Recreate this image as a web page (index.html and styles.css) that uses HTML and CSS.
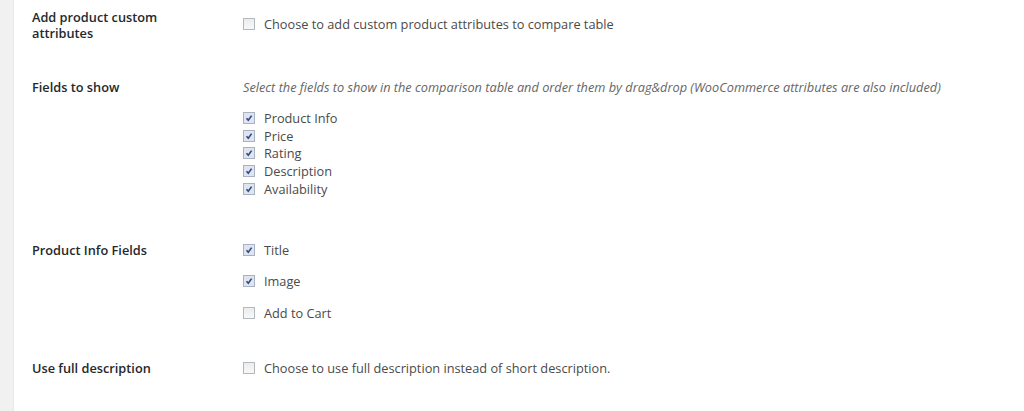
FILE: index.html
```html
<!DOCTYPE html>
<html lang="en">
<head>
<meta charset="UTF-8">
<title>Compare Settings</title>
<link rel="stylesheet" href="styles.css">
</head>
<body>
<div class="sidebar"></div>
<div class="content">
    <div class="row row-custom">
        <div class="label">Add product custom attributes</div>
        <div class="value">
            <label class="check"><span class="box"></span>Choose to add custom product attributes to compare table</label>
        </div>
    </div>

    <div class="row row-fields">
        <div class="label">Fields to show</div>
        <div class="value">
            <p class="desc">Select the fields to show in the comparison table and order them by drag&amp;drop (WooCommerce attributes are also included)</p>
            <ul class="sortable">
                <li><label class="check"><span class="box checked"><svg viewBox="0 0 10 10"><path d="M2.5 5.2 L4.3 7.3 L7.6 2.6"/></svg></span>Product Info</label></li>
                <li><label class="check"><span class="box checked"><svg viewBox="0 0 10 10"><path d="M2.5 5.2 L4.3 7.3 L7.6 2.6"/></svg></span>Price</label></li>
                <li><label class="check"><span class="box checked"><svg viewBox="0 0 10 10"><path d="M2.5 5.2 L4.3 7.3 L7.6 2.6"/></svg></span>Rating</label></li>
                <li><label class="check"><span class="box checked"><svg viewBox="0 0 10 10"><path d="M2.5 5.2 L4.3 7.3 L7.6 2.6"/></svg></span>Description</label></li>
                <li><label class="check"><span class="box checked"><svg viewBox="0 0 10 10"><path d="M2.5 5.2 L4.3 7.3 L7.6 2.6"/></svg></span>Availability</label></li>
            </ul>
        </div>
    </div>

    <div class="row row-info">
        <div class="label">Product Info Fields</div>
        <div class="value">
            <ul class="options">
                <li><label class="check"><span class="box checked"><svg viewBox="0 0 10 10"><path d="M2.5 5.2 L4.3 7.3 L7.6 2.6"/></svg></span>Title</label></li>
                <li><label class="check"><span class="box checked"><svg viewBox="0 0 10 10"><path d="M2.5 5.2 L4.3 7.3 L7.6 2.6"/></svg></span>Image</label></li>
                <li><label class="check"><span class="box"></span>Add to Cart</label></li>
            </ul>
        </div>
    </div>

    <div class="row row-full">
        <div class="label">Use full description</div>
        <div class="value">
            <label class="check"><span class="box"></span>Choose to use full description instead of short description.</label>
        </div>
    </div>
</div>
</body>
</html>
```

FILE: styles.css
```css
html, body {
    height: 100%;
}

body {
    margin: 0;
    display: flex;
    font-family: "Open Sans", Arial, sans-serif;
    font-size: 12.75px;
    line-height: 16px;
    color: #4a4a4a;
    background: #fff;
}

.sidebar {
    width: 13px;
    background-color: #f1f1f1;
    border-right: 1px solid #e9e9e9;
}

.content {
    flex: 1;
    padding-left: 18px;
}

.row {
    display: flex;
}

.label {
    width: 170px;
    margin-right: 41px;
    font-weight: 600;
    color: #23282d;
}

.value {
    flex: 1;
}

.check {
    display: flex;
    align-items: center;
}

.box {
    width: 10px;
    height: 10px;
    margin-right: 9px;
    border: 1px solid #b4b9be;
    background: linear-gradient(#ececec, #f8f8f8);
    display: flex;
    align-items: center;
    justify-content: center;
}

.box.checked {
    background: #dfe4ee;
    border-color: #a9b2c3;
}

.box svg {
    width: 10px;
    height: 10px;
}

.box svg path {
    fill: none;
    stroke: #2a4a86;
    stroke-width: 1.6;
}

ul {
    list-style: none;
    margin: 0;
    padding: 0;
}

.desc {
    margin: 0 0 14px;
    font-style: italic;
    color: #666;
}

.sortable li {
    height: 17.8px;
    display: flex;
    align-items: center;
}

.options li {
    height: 31.5px;
    display: flex;
    align-items: flex-start;
}

.row-custom {
    padding-top: 9px;
}

.row-custom .value {
    padding-top: 7px;
}

.row-fields {
    padding-top: 38px;
}

.row-info {
    padding-top: 44px;
}

.row-full {
    padding-top: 24px;
}
```
